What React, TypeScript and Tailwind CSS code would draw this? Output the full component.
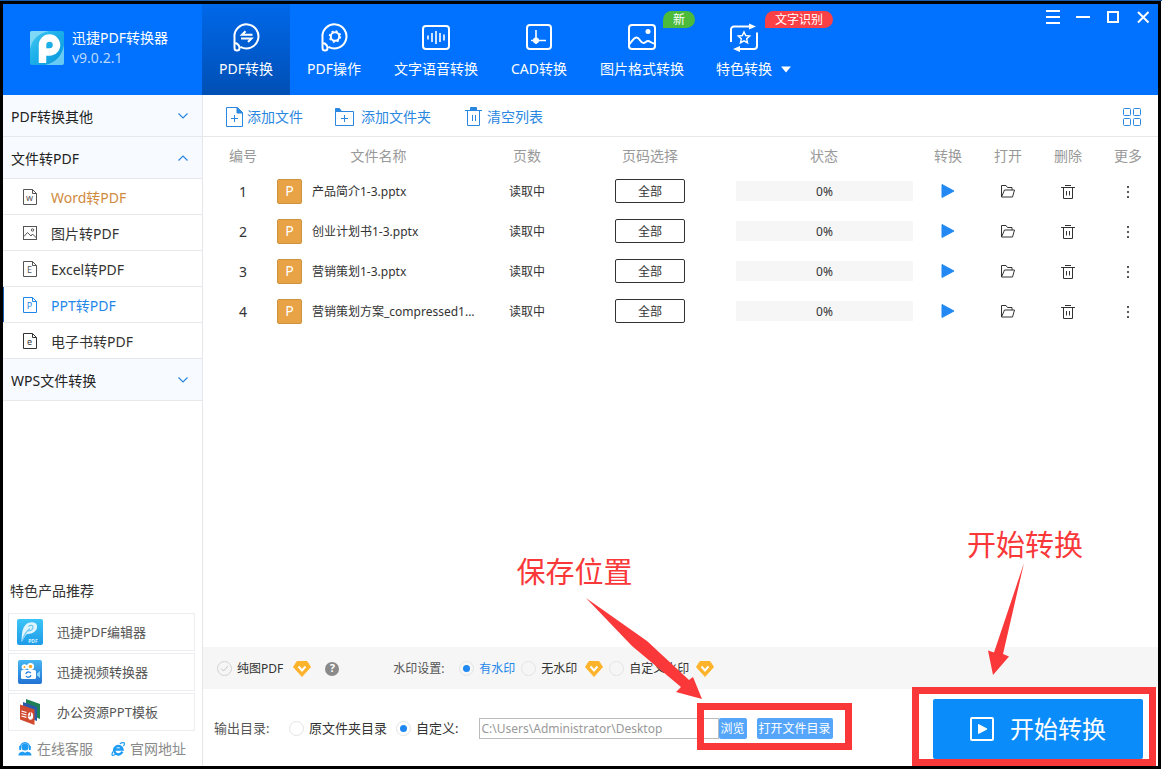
import type { ReactNode } from "react";

type IconProps = { className?: string };

const stroke = { fill: "none", stroke: "currentColor" } as const;

function AppLogo() {
  return (
    <svg width="34" height="34" viewBox="0 0 34 34" aria-hidden="true">
      <defs>
        <linearGradient id="logoBg" x1="0" y1="0" x2="1" y2="1">
          <stop offset="0" stopColor="#4cc8f3" />
          <stop offset="0.4" stopColor="#1fb2ea" />
          <stop offset="1" stopColor="#0a95dc" />
        </linearGradient>
      </defs>
      <rect width="34" height="34" rx="2" fill="url(#logoBg)" />
      <path d="M0 18V2a2 2 0 0 1 2-2h17C9 2 2 8 0 18z" fill="#8fdff7" opacity=".8" />
      <path d="M34 14v18a2 2 0 0 1-2 2H15c10-2 17-9 19-20z" fill="#7fd6f7" opacity=".8" />
      <path d="M12.500 32V14a7 7 0 1 1 7 7" fill="none" stroke="#fff" strokeWidth="7.500" />
      <path d="M16 17.300h3.800v7.450H16z" fill="#fff" />
    </svg>
  );
}

function BubbleFrame({ children }: { children: ReactNode }) {
  return (
    <svg width="28" height="30" viewBox="0 0 28 30" {...stroke} strokeWidth="2" aria-hidden="true">
      <path d="M8.500 24.800A12 12 0 1 0 2.500 15.500V26a2.500 2.500 0 0 0 5 0c0-2.500-1.500-4-4-5" />
      {children}
    </svg>
  );
}

function ConvertIcon() {
  return (
    <BubbleFrame>
      <path d="M20.500 12.700H10l3.500-3.500M9 16.500h10.500L16 20" />
    </BubbleFrame>
  );
}

function OperateIcon() {
  return (
    <BubbleFrame>
      <circle cx="15" cy="14.500" r="4.200" />
      <circle cx="15" cy="14.500" r="5.500" strokeWidth="1.400" strokeDasharray="2.100 2.220" />
    </BubbleFrame>
  );
}

function VoiceIcon() {
  return (
    <svg width="28" height="30" viewBox="0 0 28 30" {...stroke} strokeWidth="2" aria-hidden="true">
      <rect x="1" y="4" width="26" height="23" rx="3" />
      <path d="M6 13.500v4M10 11v9M14 9v13M18 11v9M22 12.500v6" strokeWidth="1.600" />
    </svg>
  );
}

function CadIcon() {
  return (
    <svg width="28" height="30" viewBox="0 0 28 30" {...stroke} strokeWidth="2" aria-hidden="true">
      <rect x="2" y="3" width="24" height="24" rx="3" />
      <path d="M11 8v14M6 18.500h15" strokeWidth="1.600" />
      <circle cx="11" cy="18.500" r="3" fill="currentColor" stroke="none" />
    </svg>
  );
}

function ImageNavIcon() {
  return (
    <svg width="28" height="30" viewBox="0 0 28 30" {...stroke} strokeWidth="2" aria-hidden="true">
      <rect x="1" y="3" width="26" height="24" rx="3" />
      <path d="M1.500 22c3-3 4-6.500 7-6.500 3.500 0 3.500 5.500 7 5.500 2 0 2.500-2 4.500-2s3 2 6 2.500" />
      <circle cx="20" cy="9.500" r="2.500" fill="currentColor" stroke="none" />
    </svg>
  );
}

function SpecialIcon() {
  return (
    <svg width="28" height="30" viewBox="0 0 28 30" {...stroke} strokeWidth="2" aria-hidden="true">
      <path d="M1 20V7.500A3 3 0 0 1 4 4.500h16M27 10.500V24a3 3 0 0 1-3 3H8" />
      <path d="M19 1.500 26 4.500l-7 3zM10 24 3 27l7 3z" fill="currentColor" stroke="none" />
      <path d="m14 10 1.700 3.600 3.900.5-2.900 2.700.8 3.900-3.500-1.900-3.500 1.900.8-3.900-2.900-2.700 3.900-.5z" strokeWidth="1.500" />
    </svg>
  );
}

function Chevron({ up }: { up?: boolean }) {
  return (
    <svg width="12" height="8" viewBox="0 0 12 8" {...stroke} className="text-[#2a87e0]" aria-hidden="true">
      <path d={up ? "M1.500 6.500 6 2l4.500 4.500" : "M1.500 1.500 6 6l4.500-4.500"} strokeWidth="1.200" />
    </svg>
  );
}

function DocIcon({ letter }: { letter: string }) {
  return (
    <svg width="14" height="16" viewBox="0 0 14 16" {...stroke} aria-hidden="true">
      <path d="M.5.500h9l4 4v11H.500zM9.500.500v4h4" />
      <text x="6.500" y="12" textAnchor="middle" fontSize="9" fill="currentColor" stroke="none">
        {letter}
      </text>
    </svg>
  );
}

function PictureIcon() {
  return (
    <svg width="14" height="14" viewBox="0 0 14 14" {...stroke} aria-hidden="true">
      <rect x=".5" y=".5" width="13" height="13" />
      <path d="m1 10.500 3.500-4L8 10l1.500-2 4 4" />
      <circle cx="9.500" cy="4" r="1.200" />
    </svg>
  );
}

function AddFileIcon() {
  return (
    <svg width="17" height="20" viewBox="0 0 17 20" {...stroke} aria-hidden="true">
      <path d="M.5.500h11l5 5v14H.500z" />
      <path d="M11 .5v5.500h5.500z" fill="currentColor" />
      <path d="M5 11.500h7M8.500 8v7" />
    </svg>
  );
}

function AddFolderIcon() {
  return (
    <svg width="19" height="18" viewBox="0 0 19 18" {...stroke} aria-hidden="true">
      <path d="M.5 3.500h18v14H.500z" />
      <path d="M.5.500h4l2 3h-6z" fill="currentColor" />
      <path d="M6 10.500h7M9.500 7v7" />
    </svg>
  );
}

function ClearIcon() {
  return (
    <svg width="17" height="20" viewBox="0 0 17 20" {...stroke} aria-hidden="true">
      <path d="M0 3.500h17M2.500 3.500v15h12v-15M7.500 8v6M10.500 8v6" />
      <path d="M5.500 0.500h6v3h-6z" fill="currentColor" />
    </svg>
  );
}

function GridIcon() {
  return (
    <svg width="18" height="18" viewBox="0 0 18 18" {...stroke} aria-hidden="true">
      <rect x=".5" y=".5" width="7" height="7" rx="1" />
      <rect x="10.500" y=".5" width="7" height="7" rx="1" />
      <rect x=".5" y="10.500" width="7" height="7" rx="1" />
      <rect x="10.500" y="10.500" width="7" height="7" rx="1" />
    </svg>
  );
}

function PlayIcon() {
  return (
    <svg width="14" height="16" viewBox="0 0 14 16" aria-hidden="true">
      <path d="M1 1.500 13 8 1 14.500z" fill="#2389f2" stroke="#2389f2" strokeLinejoin="round" />
    </svg>
  );
}

function FolderIcon() {
  return (
    <svg width="14" height="13" viewBox="0 0 14 13" {...stroke} aria-hidden="true">
      <path d="M.5 12V.500h4.500l1.500 2h4.500V5M.5 12 3.500 5h10l-2 7H.500" />
    </svg>
  );
}

function TrashIcon() {
  return (
    <svg width="14" height="14" viewBox="0 0 14 14" {...stroke} aria-hidden="true">
      <path d="M4 .5h6M0 2.500h14M2.500 2.500v11h9v-11M5.500 6v4.500M8.500 6v4.500" />
    </svg>
  );
}

function DotsIcon() {
  return (
    <svg width="2" height="14" viewBox="0 0 2 14" fill="#555" aria-hidden="true">
      <path d="M0 1h2v2H0zM0 6h2v2H0zM0 11h2v2H0z" />
    </svg>
  );
}

function GemIcon({ className }: IconProps) {
  return (
    <svg width="18" height="16" viewBox="0 0 18 16" className={className} aria-hidden="true">
      <path d="M4 .5h10L17.500 6 9 15.500.500 6z" fill="#fdb32b" stroke="#fdb32b" strokeLinejoin="round" />
      <path d="m5.500 5.500 3.500 4 3.500-4" fill="none" stroke="#fff" strokeWidth="2" />
    </svg>
  );
}

function EditorProductIcon() {
  return (
    <svg width="26" height="26" viewBox="0 0 26 26" aria-hidden="true">
      <defs>
        <linearGradient id="editorBg" x1="0" y1="0" x2="0" y2="1">
          <stop offset="0" stopColor="#3cc4f7" />
          <stop offset="1" stopColor="#1e9be8" />
        </linearGradient>
      </defs>
      <rect width="26" height="26" rx="2" fill="url(#editorBg)" />
      <path d="M4.500 23c.5-8 .5-13 3.500-16.500C11 2.500 19 2 20 6.500c1 5.500-4.500 8.500-9.500 8.500-2 0-3 4-6 8z" fill="#dff4fd" />
      <path d="M5.500 21c2-6 4-9 7.500-11.500M10.500 12c3 0 5.500-1.500 5.500-4.500 0-1.500-3-1.500-4.500 0" fill="none" stroke="#6cc9f4" strokeWidth="1.200" />
      <text x="16" y="23.500" textAnchor="middle" fontSize="5" fontWeight="700" fill="#d3effd">PDF</text>
    </svg>
  );
}

function VideoProductIcon() {
  return (
    <svg width="26" height="26" viewBox="0 0 26 26" aria-hidden="true">
      <defs>
        <linearGradient id="videoBg" x1="0" y1="0" x2="0" y2="1">
          <stop offset="0" stopColor="#45b6f3" />
          <stop offset="1" stopColor="#2173d3" />
        </linearGradient>
      </defs>
      <rect x="1" y="1" width="24" height="24" rx="2" fill="url(#videoBg)" />
      <circle cx="7.500" cy="8" r="2.800" fill="#fff" />
      <circle cx="13.500" cy="7.500" r="3.600" fill="#fff" />
      <circle cx="13.500" cy="7.500" r="1.700" fill="#f5a623" />
      <circle cx="7.500" cy="8" r="1" fill="#f5a623" />
      <rect x="4" y="11" width="15" height="9" rx="1.500" fill="#fff" />
      <path d="m20 14.500 3-2.500v7l-3-2.500z" fill="#8fd6ff" />
      <path d="M8.800 15a2.800 2.800 0 0 1 5-.8M14 16.200a2.800 2.800 0 0 1-5 .8" fill="none" stroke="#2a83dc" strokeWidth="1.300" />
    </svg>
  );
}

function PptProductIcon() {
  return (
    <svg width="26" height="26" viewBox="0 0 26 26" aria-hidden="true">
      <path d="m9 0 14 5v15L9 14z" fill="#1f7f56" />
      <path d="m6 3 14 5v14L6 17z" fill="#2a5aa8" />
      <path d="m3 5.500 14.500 5v15.500L3 20.500z" fill="#d14a30" />
      <path d="m4.500 12 5 1.600M4.500 14.500l5 1.500M4.500 17l5 1.400" stroke="#fff" strokeWidth="1.100" />
      <ellipse cx="13.500" cy="17" rx="2.600" ry="3.800" fill="#fff" />
      <path d="M13.500 13.500v3.500h-2" fill="none" stroke="#d14a30" strokeWidth=".9" />
    </svg>
  );
}

function SupportIcon() {
  return (
    <svg width="14" height="14" viewBox="0 0 14 14" aria-hidden="true">
      <circle cx="7" cy="5" r="3.600" fill="#1e9bf5" />
      <path d="M2.300 5.500a4.700 4.700 0 0 1 9.400 0" fill="none" stroke="#1e9bf5" strokeWidth="1.400" />
      <path d="M1.200 4h1.800v4H1.200zM11 4h1.800v4H11z" fill="#1e9bf5" />
      <path d="M.5 13.500C.5 10.500 3 10 4.500 9.500L7 10.800l2.500-1.300c1.500.5 4 1 4 4z" fill="#1e9bf5" />
    </svg>
  );
}

function BrowserIcon() {
  return (
    <svg width="14" height="14" viewBox="0 0 14 14" fill="none" stroke="#1e9bf5" aria-hidden="true">
      <path d="M11.300 9.600a4.200 4.200 0 1 1 .2-2.100H4.200" strokeWidth="2.500" />
      <path d="M2 9.500C.6 12 .6 13.400 2 13.400c1 0 2-.6 3-1.300M8.800 1.800C11 .5 13.400 0 13.400 1.800c0 .8-.4 1.600-.9 2.400" strokeWidth="1.200" />
    </svg>
  );
}

type NavItem = { label: string; icon: ReactNode; width: string; active?: boolean; badge?: string; badgeClass?: string; menu?: boolean };

const navItems: NavItem[] = [
  { label: "PDF转换", icon: <ConvertIcon />, width: "min-w-[88px]", active: true },
  { label: "PDF操作", icon: <OperateIcon />, width: "min-w-[88px]" },
  { label: "文字语音转换", icon: <VoiceIcon />, width: "min-w-[116px]" },
  { label: "CAD转换", icon: <CadIcon />, width: "min-w-[90px]" },
  { label: "图片格式转换", icon: <ImageNavIcon />, width: "min-w-[116px]", badge: "新", badgeClass: "w-8 bg-[#4cbb3c]" },
  { label: "特色转换", icon: <SpecialIcon />, width: "min-w-[88px]", badge: "文字识别", badgeClass: "w-[68px] bg-[#fb4146]", menu: true },
];

function Header() {
  return (
    <header className="flex h-[91px] shrink-0 bg-[#0072ff] text-white">
      <div className="flex w-[199px] shrink-0 items-center gap-2 pb-[3px] pl-[27px]">
        <AppLogo />
        <div className="flex flex-col">
          <h1 className="text-sm leading-5">迅捷PDF转换器</h1>
          <span className="text-sm leading-5 text-[#b9d8ff]">v9.0.2.1</span>
        </div>
      </div>
      <nav className="flex">
        {navItems.map((item) => (
          <button
            key={item.label}
            type="button"
            className={`relative flex flex-col items-center px-4 pt-[18px] whitespace-nowrap ${item.width} ${
              item.active ? "bg-linear-to-b from-[#0068ea] to-[#004fb4]" : ""
            }`}
          >
            {item.icon}
            <span className="mt-[7px] text-sm leading-5">{item.label}</span>
            {item.badge && (
              <span
                className={`absolute top-[7px] left-1/2 ml-[21px] h-[17px] rounded-full rounded-bl-none text-center text-xs leading-[17px] ${item.badgeClass}`}
              >
                {item.badge}
              </span>
            )}
            {item.menu && (
              <svg width="12" height="7" viewBox="0 0 12 7" className="absolute bottom-[22px] left-full -ml-2" aria-hidden="true">
                <path d="M1 .5h10L6 6.500z" fill="#fff" />
              </svg>
            )}
          </button>
        ))}
      </nav>
      <div className="mt-[5px] mr-2 ml-auto flex h-4 items-center gap-4">
        <button type="button" aria-label="菜单">
          <svg width="14" height="16" viewBox="0 0 14 16" fill="#fff"><path d="M0 1h14v2H0zM0 7h14v2H0zM0 13h14v2H0z" /></svg>
        </button>
        <button type="button" aria-label="最小化">
          <svg width="14" height="16" viewBox="0 0 14 16" fill="#fff"><path d="M0 7h14v2H0z" /></svg>
        </button>
        <button type="button" aria-label="最大化">
          <svg width="14" height="16" viewBox="0 0 14 16" fill="none" stroke="#fff" strokeWidth="2"><path d="M2 3h10v10H2z" /></svg>
        </button>
        <button type="button" aria-label="关闭">
          <svg width="14" height="16" viewBox="0 0 14 16" fill="none" stroke="#fff" strokeWidth="2"><path d="m2 3 10.500 10.500M12.500 3 2 13.500" /></svg>
        </button>
      </div>
    </header>
  );
}

const sideItems: { label: string; icon: ReactNode; className: string; iconClass: string }[] = [
  { label: "Word转PDF", icon: <DocIcon letter="w" />, className: "border-l-transparent text-[#d08a3e]", iconClass: "text-[#555]" },
  { label: "图片转PDF", icon: <PictureIcon />, className: "border-l-transparent text-[#333]", iconClass: "text-[#555]" },
  { label: "Excel转PDF", icon: <DocIcon letter="E" />, className: "border-l-transparent text-[#333]", iconClass: "text-[#555]" },
  { label: "PPT转PDF", icon: <DocIcon letter="P" />, className: "border-l-[#1c5fb8] text-[#1f87ea]", iconClass: "text-[#1f87ea]" },
  { label: "电子书转PDF", icon: <DocIcon letter="e" />, className: "border-l-transparent text-[#333]", iconClass: "text-[#333]" },
];

const products = [
  { label: "迅捷PDF编辑器", icon: <EditorProductIcon /> },
  { label: "迅捷视频转换器", icon: <VideoProductIcon /> },
  { label: "办公资源PPT模板", icon: <PptProductIcon /> },
];

function SideSection({ label, open }: { label: string; open?: boolean }) {
  return (
    <button
      type="button"
      aria-expanded={!!open}
      className="flex h-[42px] w-full items-center justify-between border-b border-[#e6e8ec] bg-[#f7faff] pr-[13px] pl-2 text-sm text-[#222]"
    >
      <span className="pt-0.5">{label}</span>
      <Chevron up={open} />
    </button>
  );
}

function Sidebar() {
  return (
    <aside className="flex w-[200px] shrink-0 flex-col border-r border-[#e4e6ea]">
      <SideSection label="PDF转换其他" />
      <SideSection label="文件转PDF" open />
      <ul>
        {sideItems.map((item) => (
          <li key={item.label} className="border-b border-[#e6e8ec]">
            <button
              type="button"
              className={`flex h-[35px] w-full items-center gap-[14px] border-l pl-[19px] text-sm ${item.className}`}
            >
              <span className={item.iconClass}>{item.icon}</span>
              <span className="pt-0.5">{item.label}</span>
            </button>
          </li>
        ))}
      </ul>
      <SideSection label="WPS文件转换" />
      <div className="mt-auto flex flex-col pr-[7px] pb-[7px] pl-[5px]">
        <h2 className="mb-3 pl-0.5 text-sm leading-5 text-[#333]">特色产品推荐</h2>
        <ul className="flex flex-col gap-0.5">
          {products.map((p) => (
            <li key={p.label}>
              <a href="#" className="flex h-[38px] items-center gap-[14px] border border-[#ebedf0] pl-2 text-[13px] text-[#555]">
                {p.icon}
                <span className="pt-0.5">{p.label}</span>
              </a>
            </li>
          ))}
        </ul>
        <div className="mt-2 flex gap-[18px] pl-[10px] text-sm leading-5 text-[#8a8a8a]">
          <a href="#" className="flex items-center gap-[5px]"><SupportIcon />在线客服</a>
          <a href="#" className="flex items-center gap-[5px]"><BrowserIcon />官网地址</a>
        </div>
      </div>
    </aside>
  );
}

const files = ["产品简介1-3.pptx", "创业计划书1-3.pptx", "营销策划1-3.pptx", "营销策划方案_compressed1..."];

function FileTable() {
  return (
    <table className="w-full table-fixed text-center text-xs text-[#333]">
      <colgroup>
        <col className="w-[74px]" />
        <col />
        <col className="w-[94px]" />
        <col className="w-[152px]" />
        <col className="w-[192px]" />
        <col className="w-[60px]" />
        <col className="w-[60px]" />
        <col className="w-[60px]" />
        <col className="w-[60px]" />
      </colgroup>
      <thead>
        <tr className="h-[34px] text-sm text-[#999] *:pt-1 *:font-normal">
          <th className="pl-1.5">编号</th>
          <th>文件名称</th>
          <th>页数</th>
          <th>页码选择</th>
          <th className="pl-1">状态</th>
          <th>转换</th>
          <th>打开</th>
          <th>删除</th>
          <th>更多</th>
        </tr>
      </thead>
      <tbody>
        {files.map((name, i) => (
          <tr key={name} className="h-10">
            <td className="pt-0.5 pl-1.5 text-sm">{i + 1}</td>
            <td>
              <div className="flex items-center gap-[10px] whitespace-nowrap">
                <span className="flex size-[25px] shrink-0 items-center justify-center rounded-xs border border-[#cf9340] bg-[#e8a346] text-sm text-white">P</span>
                <span className="pt-0.5">{name}</span>
              </div>
            </td>
            <td className="pt-0.5">读取中</td>
            <td>
              <button type="button" className="h-6 w-[70px] rounded-xs border border-[#333] pt-0.5 align-middle">全部</button>
            </td>
            <td className="pr-[5px] pl-[10px]">
              <div role="progressbar" aria-label={name} aria-valuenow={0} className="h-5 bg-[#f6f6f6] pt-px leading-5">0%</div>
            </td>
            <td><button type="button" aria-label="转换" className="align-middle"><PlayIcon /></button></td>
            <td><button type="button" aria-label="打开" className="align-middle"><FolderIcon /></button></td>
            <td><button type="button" aria-label="删除" className="align-middle"><TrashIcon /></button></td>
            <td><button type="button" aria-label="更多" className="align-middle"><DotsIcon /></button></td>
          </tr>
        ))}
      </tbody>
    </table>
  );
}

function Radio({ name, label, checked, labelClass }: { name: string; label: string; checked?: boolean; labelClass?: string }) {
  return (
    <label className="flex items-center gap-[5px] whitespace-nowrap">
      <input
        type="radio"
        name={name}
        defaultChecked={checked}
        className="size-[15px] shrink-0 appearance-none rounded-full border border-[#e2e4e6] bg-clip-content p-[3px] checked:bg-[#1f87f0]"
      />
      <span className={labelClass}>{label}</span>
    </label>
  );
}

function OptionsBar() {
  return (
    <div className="flex h-[42px] shrink-0 items-center bg-[#f6f6f6] pt-px pl-[14px] text-xs text-[#333]">
      <label className="flex items-center gap-[5px]">
        <span className="grid place-items-center">
          <input type="checkbox" className="col-start-1 row-start-1 size-[15px] appearance-none rounded-full border border-[#d2d2d2]" />
          <svg width="9" height="7" viewBox="0 0 9 7" className="pointer-events-none col-start-1 row-start-1" aria-hidden="true">
            <path d="m1 3.500 2.500 2.500L8 1" fill="none" stroke="#c4c4c4" />
          </svg>
        </span>
        纯图PDF
      </label>
      <GemIcon className="ml-[10px]" />
      <span className="ml-[14px] flex size-[14px] items-center justify-center rounded-full bg-[#8a8a8a] text-[11px] font-bold text-white">?</span>
      <fieldset className="ml-[54px] flex items-center">
        <span className="w-[66px] text-[#555]">水印设置:</span>
        <Radio name="watermark" label="有水印" checked labelClass="text-[#1f87ea]" />
        <span className="w-[6px]" />
        <Radio name="watermark" label="无水印" />
        <GemIcon className="mr-[6px] ml-2" />
        <Radio name="watermark" label="自定义水印" />
        <GemIcon className="ml-[7px]" />
      </fieldset>
    </div>
  );
}

function OutputBar() {
  return (
    <div className="flex h-[77px] shrink-0 items-center justify-between pt-0.5 pl-[11px] text-[13px] text-[#333]">
      <div className="flex items-center">
        <span className="w-[75px] whitespace-nowrap text-[#555]">输出目录:</span>
        <Radio name="output" label="原文件夹目录" />
        <span className="w-[9px]" />
        <Radio name="output" label="自定义:" checked />
        <input
          type="text"
          aria-label="输出目录"
          defaultValue="C:\Users\Administrator\Desktop"
          className="ml-5 h-[21px] w-[240px] border border-[#bbb] px-0.5 text-xs text-[#999]"
        />
        <div className="relative flex gap-[10px] text-xs text-white">
          <button type="button" className="h-[21px] w-7 rounded-xs bg-[#55a6fb] whitespace-nowrap">浏览</button>
          <button type="button" className="h-[21px] w-[76px] rounded-xs bg-[#55a6fb] whitespace-nowrap">打开文件目录</button>
          <div className="pointer-events-none absolute -top-[15px] -left-[22px] h-[47px] w-[155px] border-[7px] border-[#fa3839]" />
          <svg width="116" height="102" viewBox="0 0 116 102" className="pointer-events-none absolute right-[131px] bottom-[39px]" fill="#fa3839" aria-hidden="true">
            <path d="M0 0 61 43 103 82 107 79 116 101 90 94 95 89 46 48z" />
          </svg>
          <span className="pointer-events-none absolute right-[200px] bottom-[149px] text-[29px] leading-9 whitespace-nowrap text-[#fa3839]">保存位置</span>
        </div>
      </div>
      <div className="relative mr-[15px]">
        <button type="button" className="flex h-[60px] w-[210px] items-center justify-center gap-4 rounded-xs bg-[#0a8dfb] text-2xl text-white">
          <svg width="24" height="24" viewBox="0 0 24 24" aria-hidden="true">
            <rect x="1" y="1" width="22" height="22" rx="1" fill="none" stroke="#fff" strokeWidth="2" />
            <path d="M8.500 7.500 17 12l-8.500 4.500z" fill="#fff" stroke="#fff" strokeLinejoin="round" />
          </svg>
          开始转换
        </button>
        <div className="pointer-events-none absolute -top-3 -left-[21px] h-[79px] w-[244px] border-[7px] border-[#fa3839]" />
        <svg width="37" height="112" viewBox="0 0 37 112" className="pointer-events-none absolute bottom-[84px] left-[55px]" fill="#fa3839" aria-hidden="true">
          <path d="M36 0 15 91 21 93.500 5 112 0 87.500 6 89.500z" />
        </svg>
        <span className="pointer-events-none absolute bottom-[196px] left-[34px] text-[29px] leading-9 whitespace-nowrap text-[#fa3839]">开始转换</span>
      </div>
    </div>
  );
}

export default function App() {
  return (
    <div className="flex min-h-screen flex-col border-t border-[#1b5fae] bg-white pr-px pb-px font-['Noto_Sans','Noto_Sans_CJK_SC',sans-serif]">
      <div className="flex flex-1 flex-col border-[3px] border-black">
        <Header />
        <div className="flex flex-1">
          <Sidebar />
          <main className="flex min-w-0 flex-1 flex-col">
            <div className="flex h-[42px] shrink-0 items-center border-b border-[#e6e8ec] pt-0.5 pr-[17px] pl-[23px] text-sm text-[#2a87e0]">
              <button type="button" className="flex items-center gap-1"><AddFileIcon />添加文件</button>
              <button type="button" className="ml-8 flex items-center gap-[7px]"><AddFolderIcon />添加文件夹</button>
              <button type="button" className="ml-[34px] flex items-center gap-[5px]"><ClearIcon />清空列表</button>
              <button type="button" aria-label="网格视图" className="ml-auto"><GridIcon /></button>
            </div>
            <div className="flex-1">
              <FileTable />
            </div>
            <OptionsBar />
            <OutputBar />
          </main>
        </div>
      </div>
    </div>
  );
}
